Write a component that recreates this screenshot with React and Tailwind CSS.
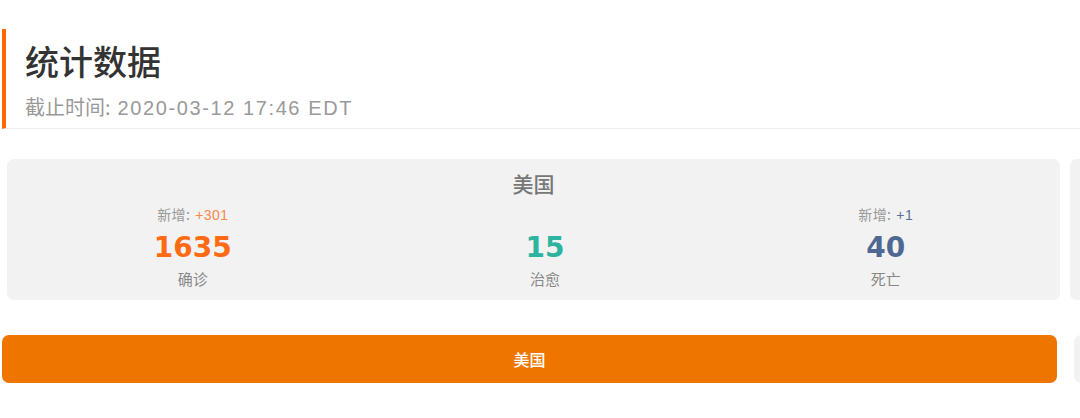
import React from "react";

const cjk = { fontFamily: '"Noto Sans CJK SC", "Noto Sans", sans-serif' };
const num = { fontFamily: '"DejaVu Sans", "Noto Sans CJK SC", sans-serif' };
const latin = { fontFamily: '"Liberation Sans", "Noto Sans CJK SC", sans-serif' };

const stats = [
  { label: "确诊", value: "1635", add: "+301", color: "text-[#ff6a13]", addColor: "text-[#f7884a]" },
  { label: "治愈", value: "15", add: null, color: "text-[#2db4a0]", addColor: "" },
  { label: "死亡", value: "40", add: "+1", color: "text-[#4e6892]", addColor: "text-[#5a6f96]" },
];

const StatCard = ({ title }) => (
  <div className="shrink-0 w-[1053px] h-[141px] bg-[#f2f2f2] rounded-[7px] pt-[10px] flex flex-col items-center">
    <div className="text-[21px] leading-[28px] text-[#777] font-medium">{title}</div>
    <div className="w-full flex justify-around mt-[8px]">
      {stats.map((s) => (
        <div key={s.label} className="flex flex-col items-center">
          <div className="h-[18px] text-[14px] leading-[18px] text-[#999] tracking-[0.4px]">
            {s.add && (
              <>
                新增:<span className={`ml-[5px] ${s.addColor}`} style={latin}>{s.add}</span>
              </>
            )}
          </div>
          <div className={`mt-[8px] text-[28px] leading-[34px] font-bold ${s.color}`} style={num}>
            {s.value}
          </div>
          <div className="mt-[4px] text-[15px] leading-[20px] text-[#888]">{s.label}</div>
        </div>
      ))}
    </div>
  </div>
);

export default function App() {
  return (
    <div className="w-[1080px] h-[418px] bg-white overflow-hidden" style={cjk}>
      {/* header */}
      <div className="mt-[29px] ml-[2px] h-[100px] border-l-4 border-[#ff6a00] border-b border-b-[#ececec] pl-[19px] pt-[12px]">
        <h1 className="text-[34px] leading-[40px] font-medium text-[#333]">统计数据</h1>
        <p className="mt-[14px] text-[20px] leading-[24px] text-[#999]">
          截止时间:<span className="ml-[7px] tracking-[1.6px]" style={latin}>2020-03-12 17:46 EDT</span>
        </p>
      </div>

      {/* stat cards, next one peeks in from the right */}
      <div className="mt-[30px] pl-[7px] flex gap-[10px] overflow-hidden">
        <StatCard title="美国" />
        <div className="shrink-0 w-[200px] h-[141px] bg-[#f2f2f2] rounded-[7px]" />
      </div>

      {/* country tabs */}
      <div className="mt-[35px] pl-[2px] flex gap-[17px] overflow-hidden">
        <button className="shrink-0 w-[1055px] h-[48px] rounded-[7px] bg-[#ee7600] text-white text-[16px] font-medium">
          美国
        </button>
        <div className="shrink-0 w-[200px] h-[48px] rounded-[7px] bg-[#f2f2f2]" />
      </div>
    </div>
  );
}
